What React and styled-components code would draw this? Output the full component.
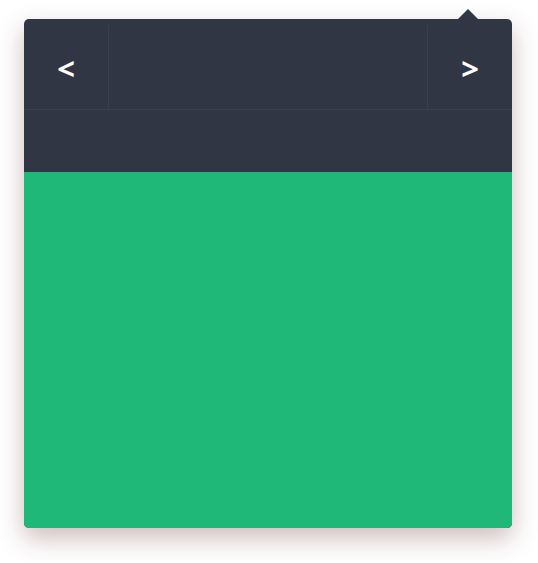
import React from 'react';
import styled, { createGlobalStyle } from 'styled-components';

const GlobalStyle = createGlobalStyle`
  body {
    margin: 0;
    background: #ffffff;
    font-family: 'Open Sans', 'Liberation Sans', sans-serif;
  }
`;

const Page = styled.div`
  padding: 19px 26px 35px 24px;
`;

const Popover = styled.div`
  position: relative;
  width: 488px;
  height: 509px;
  border-radius: 5px;
  background: #303643;
  box-shadow: 0 10px 26px rgba(90, 30, 30, 0.3);
  display: flex;
  flex-direction: column;

  &::before {
    content: '';
    position: absolute;
    top: -10px;
    right: 34px;
    border-left: 10px solid transparent;
    border-right: 10px solid transparent;
    border-bottom: 10px solid #303643;
  }
`;

const NavBar = styled.div`
  display: flex;
  padding-top: 6px;
  border-bottom: 1px solid #3a404d;
  border-radius: 5px 5px 0 0;
`;

const NavButton = styled.button`
  width: ${(p) => p.$width}px;
  height: 84px;
  background: none;
  border: none;
  ${(p) => (p.$side === 'left' ? 'border-right' : 'border-left')}: 1px solid #3a404d;
  color: #ffffff;
  font-family: 'Open Sans', 'Liberation Sans', sans-serif;
  font-weight: 700;
  font-size: 31px;
  line-height: 1;
  padding: 3px 0 0;
  cursor: pointer;
  display: flex;
  align-items: center;
  justify-content: center;
`;

const Title = styled.div`
  flex: 1;
`;

const SubBar = styled.div`
  height: 62px;
`;

const Body = styled.div`
  flex: 1;
  background: #20b878;
  border-radius: 0 0 5px 5px;
`;

export default function App() {
  return (
    <>
      <GlobalStyle />
      <Page>
        <Popover>
          <NavBar>
            <NavButton $side="left" $width={85}>&lt;</NavButton>
            <Title />
            <NavButton $side="right" $width={85}>&gt;</NavButton>
          </NavBar>
          <SubBar />
          <Body />
        </Popover>
      </Page>
    </>
  );
}
